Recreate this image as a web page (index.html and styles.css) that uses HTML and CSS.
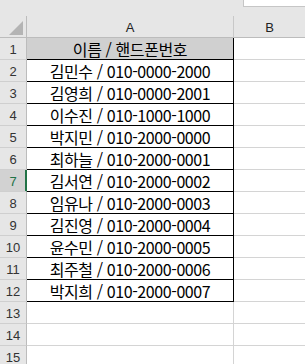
FILE: index.html
```html
<!DOCTYPE html>
<html lang="ko">
<head>
<meta charset="utf-8">
<title>Sheet</title>
<link rel="stylesheet" href="styles.css">
</head>
<body>
<div class="topbar"><div class="fbox"></div></div>
<div class="grid">
  <div class="corner"><svg width="26" height="21" viewBox="0 0 26 21"><polygon points="9,19 23,19 23,5" fill="#b4b4b4"/></svg></div>
  <div class="colhead">A</div>
  <div class="colhead">B</div>

  <div class="rowhead">1</div><div class="cell a title">이름 / 핸드폰번호</div><div class="cell b"></div>
  <div class="rowhead">2</div><div class="cell a">김민수 / 010-0000-2000</div><div class="cell b"></div>
  <div class="rowhead">3</div><div class="cell a">김영희 / 010-0000-2001</div><div class="cell b"></div>
  <div class="rowhead">4</div><div class="cell a">이수진 / 010-1000-1000</div><div class="cell b"></div>
  <div class="rowhead">5</div><div class="cell a">박지민 / 010-2000-0000</div><div class="cell b"></div>
  <div class="rowhead">6</div><div class="cell a">최하늘 / 010-2000-0001</div><div class="cell b"></div>
  <div class="rowhead sel">7</div><div class="cell a">김서연 / 010-2000-0002</div><div class="cell b"></div>
  <div class="rowhead">8</div><div class="cell a">임유나 / 010-2000-0003</div><div class="cell b"></div>
  <div class="rowhead">9</div><div class="cell a">김진영 / 010-2000-0004</div><div class="cell b"></div>
  <div class="rowhead">10</div><div class="cell a">윤수민 / 010-2000-0005</div><div class="cell b"></div>
  <div class="rowhead">11</div><div class="cell a">최주철 / 010-2000-0006</div><div class="cell b"></div>
  <div class="rowhead">12</div><div class="cell a">박지희 / 010-2000-0007</div><div class="cell b"></div>
  <div class="rowhead">13</div><div class="cell e"></div><div class="cell b"></div>
  <div class="rowhead">14</div><div class="cell e"></div><div class="cell b"></div>
  <div class="rowhead">15</div><div class="cell e"></div><div class="cell b"></div>
</div>
</body>
</html>
```
FILE: styles.css
```css
html, body {
  margin: 0;
  padding: 0;
  overflow: hidden;
  background: #ffffff;
}
body {
  width: 305px;
  height: 364px;
  font-family: "Noto Sans CJK KR", "Noto Sans", sans-serif;
}
.topbar {
  height: 16px;
  background: #e6e6e6;
  display: flex;
  justify-content: flex-end;
}
.fbox {
  width: 61px;
  height: 6px;
  background: #ffffff;
  border-left: 1px solid #c6c6c6;
  border-bottom: 1px solid #c6c6c6;
}
.grid {
  display: grid;
  grid-template-columns: 27px 207px 72px;
  grid-auto-rows: 22px;
  width: 306px;
}
.corner, .colhead, .rowhead {
  background: #e6e6e6;
  box-sizing: border-box;
  border-right: 1px solid #bcbcbc;
  border-bottom: 1px solid #bcbcbc;
}
.corner {
  display: flex;
}
.colhead {
  display: flex;
  align-items: center;
  justify-content: center;
  font-family: "Liberation Sans", "Noto Sans", sans-serif;
  font-size: 13px;
  color: #222;
  border-right-color: #c8c8c8;
  padding-top: 1px;
}
.rowhead {
  display: flex;
  align-items: center;
  justify-content: center;
  font-family: "Liberation Sans", "Noto Sans", sans-serif;
  font-size: 13px;
  color: #333;
  border-bottom-color: #cfcfcf;
  padding-top: 2px;
}
.rowhead.sel {
  background: #d2d2d2;
  color: #217346;
  border-right-color: #217346;
  box-shadow: inset -1px 0 0 #217346;
}
.cell {
  box-sizing: border-box;
  border-right: 1px solid #d4d4d4;
  border-bottom: 1px solid #d4d4d4;
}
.cell.a {
  border-right-color: #000;
  border-bottom-color: #000;
  display: flex;
  align-items: center;
  justify-content: center;
  font-size: 16px;
  letter-spacing: -0.4px;
  color: #000;
  white-space: nowrap;
  line-height: 1;
}
.cell.title {
  background: #d0d0d0;
}
```
